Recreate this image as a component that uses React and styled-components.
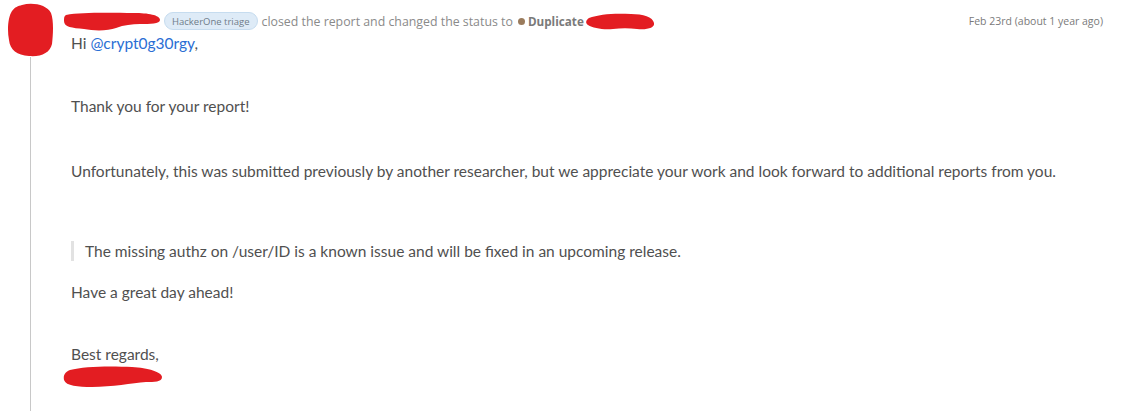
import React from 'react';
import styled, { createGlobalStyle } from 'styled-components';

const GlobalStyle = createGlobalStyle`
  html, body {
    margin: 0;
    padding: 0;
    background: #ffffff;
  }
  body {
    font-family: Lato, "Open Sans", sans-serif;
  }
`

const Activity = styled.div`
  display: grid;
  grid-template-columns: 62px 1fr;
  width: 1126px;
  height: 411px;
  overflow: hidden;
`
const Rail = styled.div`
  display: flex;
  flex-direction: column;
  align-items: center;
  padding-top: 3px;
`
const RailLine = styled.div`
  flex: 1;
  width: 1px;
  margin-right: 1px;
  background: #c8c8c8;
`
const Content = styled.div`
  display: flex;
  flex-direction: column;
  padding-right: 23px;
`
const Header = styled.div`
  display: flex;
  align-items: center;
  height: 20px;
  margin-top: 11px;
  font-family: "Open Sans", sans-serif;
  font-size: 12.35px;
  color: #8a8a8a;
  white-space: nowrap;
`
const Badge = styled.span`
  display: inline-flex;
  align-items: center;
  height: 16px;
  padding: 0 7px;
  margin: 0 4px 0 2px;
  border-radius: 9px;
  background: #deebf7;
  border: 1px solid #c6dcef;
  color: #6f7c89;
  font-size: 9.5px;
`
const StatusDot = styled.span`
  display: inline-block;
  width: 7px;
  height: 7px;
  border-radius: 50%;
  background: #9a7b5c;
  margin: 0 3px 0 5px;
`
const Status = styled.strong`
  font-weight: 700;
  font-size: 11.7px;
  color: #7a7a7a;
  margin-right: 1px;
`
const Date = styled.span`
  margin-left: auto;
  font-size: 10.5px;
  color: #7a7a7a;
`
const Body = styled.div`
  padding-left: 9px;
  font-family: Lato, sans-serif;
  font-size: 15.5px;
  line-height: 20px;
  color: #505050;
`
const Para = styled.p`
  margin: ${p => p.$top || 0}px 0 0 0;
`
const Mention = styled.a`
  color: #2a6ed4;
  text-decoration: none;
`
const Quote = styled.blockquote`
  margin: ${p => p.$top}px 0 0 0;
  padding: 0 0 0 11px;
  border-left: 3px solid #e2e2e2;
`

const Scribble = ({ w, h, d }) => (
  <svg width={w} height={h} viewBox={`0 0 ${w} ${h}`} aria-hidden="true">
    <path d={d} fill="#e31d22" />
  </svg>
)

export default function App() {
  return (
    <>
      <GlobalStyle />
      <Activity>
        <Rail>
          <Scribble
            w={48}
            h={54}
            d="M15 2 C26 -1 40 2 44 10 C47 18 46 32 45 41 C43 50 34 54 22 53 C10 52 3 47 2 37 C0 27 1 14 5 8 C8 4 11 3 15 2 Z"
          />
          <RailLine />
        </Rail>
        <Content>
          <Header>
            <Scribble
              w={100}
              h={22}
              d="M4 5 C20 2 50 3 72 3 C86 3 98 5 98 10 C98 14 88 14 78 14 C70 14 62 15 54 18 C46 21 32 21 22 19 C10 18 2 17 2 11 C2 8 2 6 4 5 Z"
            />
            <Badge>HackerOne triage</Badge>
            closed the report and changed the status to
            <StatusDot />
            <Status>Duplicate</Status>
            <Scribble
              w={72}
              h={20}
              d="M4 7 C14 3 30 2 46 3 C58 3 68 6 69 12 C70 17 62 19 52 18 C44 17 36 17 28 18 C18 19 8 17 3 14 C0 12 1 9 4 7 Z"
            />
            <Date>Feb 23rd (about 1 year ago)</Date>
          </Header>
          <Body>
            <Para $top={2}>Hi <Mention href="#">@crypt0g30rgy</Mention>,</Para>
            <Para $top={43}>Thank you for your report!</Para>
            <Para $top={45}>Unfortunately, this was submitted previously by another researcher, but we appreciate your work and look forward to additional reports from you.</Para>
            <Quote $top={60}>The missing authz on /user/ID is a known issue and will be fixed in an upcoming release.</Quote>
            <Para $top={21}>Have a great day ahead!</Para>
            <Para $top={42}>Best regards,</Para>
          </Body>
          <Scribble
            w={102}
            h={26}
            d="M8 6 C22 2 50 2 70 3 C86 4 100 8 100 13 C100 18 92 18 84 18 C70 19 50 23 30 23 C16 23 4 22 2 16 C1 11 3 8 8 6 Z"
          />
        </Content>
      </Activity>
    </>
  )
}
